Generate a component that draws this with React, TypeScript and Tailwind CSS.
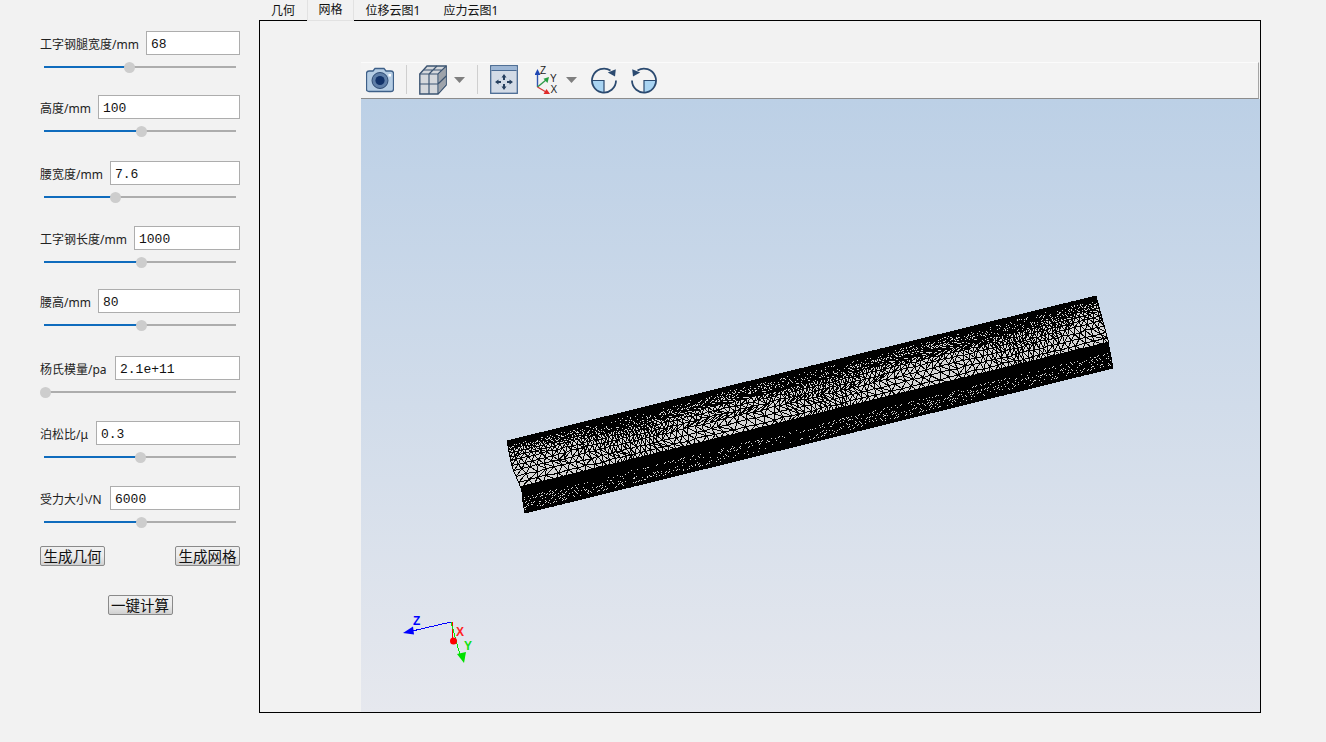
import { useMemo } from "react";

const cjk = "font-['Noto_Sans','Noto_Sans_CJK_SC',sans-serif]";

const params = [
  { label: "工字钢腿宽度/mm", value: "68", fill: 85, top: "mt-[31px]", input: "w-[94px]" },
  { label: "高度/mm", value: "100", fill: 97, top: "mt-5", input: "w-[142px]" },
  { label: "腰宽度/mm", value: "7.6", fill: 71, top: "mt-[22px]", input: "w-[130px]" },
  { label: "工字钢长度/mm", value: "1000", fill: 97, top: "mt-[21px]", input: "w-[106px]" },
  { label: "腰高/mm", value: "80", fill: 97, top: "mt-[19px]", input: "w-[142px]" },
  { label: "杨氏模量/pa", value: "2.1e+11", fill: 1, top: "mt-[23px]", input: "w-[125px]" },
  { label: "泊松比/μ", value: "0.3", fill: 96, top: "mt-[21px]", input: "w-[144px]" },
  { label: "受力大小/N", value: "6000", fill: 97, top: "mt-[21px]", input: "w-[130px]" },
];

const ParamRow = ({ p }: { p: (typeof params)[number] }) => (
  <div className={p.top}>
    <div className="flex items-center justify-between h-6">
      <span className={`${cjk} text-xs text-[#222] whitespace-nowrap pt-[3px]`}>{p.label}</span>
      <input
        readOnly
        value={p.value}
        className={`${p.input} h-6 border border-[#adadad] bg-white pl-1 pt-[3px] text-[13px] text-[#111] font-['Liberation_Mono',monospace] outline-none`}
      />
    </div>
    <div className="flex items-center h-4 mt-1 mx-1">
      <div className="h-[2px] bg-[#0f6cbd]" style={{ width: p.fill }} />
      <div className="w-[11px] h-[11px] rounded-full bg-[#cdcdcd] -mx-[5px] z-10 shrink-0" />
      <div className="h-[2px] flex-1 bg-[#adadad]" />
    </div>
  </div>
);

const Btn = ({ children }: { children: string }) => (
  <button className="w-[65px] h-5 rounded-[2px] border border-[#8a8a8a] bg-gradient-to-b from-[#f0f0f0] via-[#ececec] to-[#d0d0d0] text-[14.5px] leading-none text-[#111] font-['Noto_Sans_CJK_SC',sans-serif]">
    {children}
  </button>
);

const Camera = () => (
  <svg width="28" height="30" viewBox="0 0 28 30" className="ml-[5px]">
    <path d="M7 6 L9 3.5 H18 L20 6 H25 Q27.5 6 27.5 8.5 V24 Q27.5 26.5 25 26.5 H3 Q.5 26.5 .5 24 V8.5 Q.5 6 3 6 Z" fill="#b5cde4" stroke="#3d5f88" strokeWidth="1.3" />
    <circle cx="14" cy="15.5" r="8" fill="#5f7fa8" stroke="#2f4c74" />
    <circle cx="14" cy="15.5" r="4.6" fill="#12336a" />
    <rect x="22.5" y="9" width="2.5" height="2.5" fill="#fff" />
  </svg>
);

const Cube = () => (
  <svg width="28" height="30" viewBox="0 0 28 30" className="ml-[12px]">
    <path d="M.8 9 L8 1 H27.2 V20 L19 29 H.8 Z" fill="#d5d8dc" stroke="#3d5572" strokeWidth="1.4" />
    <path d="M19.7 9.6 L26.5 2.3 V19.7 L19.7 27.5 Z" fill="#9ea3aa" />
    <path d="M.8 9 H19 V29 M19 9 L27.2 1 M.8 19 H19 M10 9 V29 M10 9 L18 1 M5 5 H23 M19 19 L27.2 11" fill="none" stroke="#3d5572" strokeWidth="1.2" />
  </svg>
);

const Caret = ({ ml }: { ml: string }) => (
  <svg width="11" height="6" viewBox="0 0 11 6" className={ml}>
    <path d="M0 0 H11 L5.5 6 Z" fill="#7f7f7f" />
  </svg>
);

const Sep = ({ ml }: { ml: string }) => <div className={`${ml} w-px h-[29px] bg-[#cfcfcf]`} />;

const FitView = () => (
  <svg width="28" height="29" viewBox="0 0 28 29" className="ml-3">
    <rect x=".7" y=".7" width="26.6" height="27.6" fill="#d3dbe6" stroke="#4a6a92" strokeWidth="1.3" />
    <rect x="1.4" y="1.4" width="25.2" height="3.6" fill="#9db7d6" />
    <rect x="1.4" y="5" width="25.2" height="1" fill="#4a6a92" />
    <path d="M14 9 L16.5 12.5 H15 V15 H13 V12.5 H11.5 Z M14 25 L16.5 21.5 H15 V19 H13 V21.5 H11.5 Z M5 17 L8.5 14.5 V16 H11 V18 H8.5 V19.5 Z M23 17 L19.5 14.5 V16 H17 V18 H19.5 V19.5 Z" fill="#27405f" />
  </svg>
);

const AxisIcon = () => (
  <svg width="24" height="30" viewBox="0 0 24 30" className="ml-[17px]">
    <path d="M2.5 22 V8" stroke="#2f55b0" strokeWidth="1.4" />
    <path d="M2.5 4 L5.5 10 H-.5 Z" fill="#1f47b5" />
    <path d="M2.5 22 L11 15" stroke="#2f9a4a" strokeWidth="1.4" />
    <path d="M14 12 L12.5 18 L8.5 13.8 Z" fill="#24a040" />
    <path d="M2.5 22 L11 27" stroke="#d63a3a" strokeWidth="1.4" />
    <path d="M15 29 L8.5 29 L11.5 24 Z" fill="#e02b2b" />
    <text x="5" y="9" fontSize="10" fontFamily="Liberation Sans" fill="#222">Z</text>
    <text x="15" y="16.5" fontSize="10" fontFamily="Liberation Sans" fill="#222">Y</text>
    <text x="15.5" y="28" fontSize="10" fontFamily="Liberation Sans" fill="#222">X</text>
  </svg>
);

const Rotate = ({ ml, flip }: { ml: string; flip?: boolean }) => (
  <svg width="26" height="28" viewBox="0 0 26 28" className={ml}>
    <g transform={flip ? "translate(26 0) scale(-1 1)" : undefined}>
      <path d="M13 14.5 H1.2 A12 12 0 0 0 13 26.5 Z" fill="#a9d4f2" />
      <path d="M19.5 4.5 A12 12 0 1 0 25 14.5" fill="none" stroke="#2b4a70" strokeWidth="1.8" />
      <path d="M1 14.5 H13 V26" fill="none" stroke="#2b4a70" strokeWidth="1.2" />
      <path d="M24.8 3.2 L24 10.5 L16.8 6.5 Z" fill="#2b4a70" />
    </g>
  </svg>
);

type Pt = [number, number];

const lerp = (a: Pt, b: Pt, t: number): Pt => [a[0] + (b[0] - a[0]) * t, a[1] + (b[1] - a[1]) * t];

// tiny seeded generator so the mesh is the same on every render
const makeRand = (seed: number) => () => {
  seed = (seed * 1664525 + 1013904223) % 4294967296;
  return seed / 4294967296;
};

const strip = (
  left: (v: number) => Pt,
  right: (v: number) => Pt,
  rows: number[],
  spacing: (v: number, u: number) => number,
  jitter: number,
  seed: number,
) => {
  const rand = makeRand(seed);
  const len = Math.hypot(right(0)[0] - left(0)[0], right(0)[1] - left(0)[1]);
  const lines: Pt[][] = rows.map((v, r) => {
    const a = left(v);
    const b = right(v);
    const pts: Pt[] = [];
    let u = 0;
    while (u < 1) {
      const p = lerp(a, b, u);
      const edge = r === 0 || r === rows.length - 1 || u === 0;
      pts.push(edge ? p : [p[0] + (rand() - 0.5) * jitter, p[1] + (rand() - 0.5) * jitter]);
      u += (spacing(v, u) * (0.8 + rand() * 0.4)) / len;
    }
    pts.push(b);
    return pts;
  });
  let d = "";
  lines.forEach((line, r) => {
    d += "M" + line.map((p) => `${p[0].toFixed(1)} ${p[1].toFixed(1)}`).join("L");
    const next = lines[r + 1];
    if (!next) return;
    let i = 0;
    let j = 0;
    d += `M${line[0][0].toFixed(1)} ${line[0][1].toFixed(1)}L${next[0][0].toFixed(1)} ${next[0][1].toFixed(1)}`;
    while (i < line.length - 1 || j < next.length - 1) {
      const ui = (i + 1) / (line.length - 1);
      const uj = (j + 1) / (next.length - 1);
      if (j >= next.length - 1 || (i < line.length - 1 && ui < uj)) i++;
      else j++;
      d += `M${line[i][0].toFixed(1)} ${line[i][1].toFixed(1)}L${next[j][0].toFixed(1)} ${next[j][1].toFixed(1)}`;
    }
  });
  return d;
};

const Mesh = () => {
  const { web, flange } = useMemo(() => {
    const webLeft = (v: number): Pt =>
      v < 0.55 ? lerp([507, 441], [512, 467], v / 0.55) : lerp([512, 467], [521, 488], (v - 0.55) / 0.45);
    const webRight = (v: number): Pt => lerp([1096, 296], [1109, 344], v);
    const rows: number[] = [0];
    let y = 0;
    while (y < 47) {
      y += Math.min(1.8 + 0.15 * y, 6);
      rows.push(Math.min(y / 48, 1));
    }
    const web = strip(
      webLeft,
      webRight,
      rows,
      (v, u) => Math.max(2, (1.8 + 8.5 * v) * (0.85 + 0.3 * Math.sin(u * 19 + 1))),
      1.6,
      7,
    );
    const fRows = Array.from({ length: 8 }, (_, i) => i / 7);
    const flange = strip(
      (v) => lerp([522, 497], [525, 513], v),
      (v) => lerp([1110, 352], [1113, 368], v),
      fRows,
      () => 2.9,
      0.8,
      11,
    );
    return { web, flange };
  }, []);

  return (
    <g shapeRendering="crispEdges">
      <path d="M507 441 L1096 296 L1109 344 L1113 368 L525 513 L521 488 L512 467 Z" fill="#d6d6d6" />
      <path d={web} fill="none" stroke="#000" strokeWidth="1" />
      <path d={flange} fill="none" stroke="#000" strokeWidth="1" />
      <path d="M507 441 L1096 296 L1096.8 299.5 L507 446 Z" fill="#000" />
      <path d="M521 486 L1109 341.5 L1110 352 L522 497 Z" fill="#000" />
      <path d="M524.5 510 L1113 365 L1113 368 L525 513 Z" fill="#000" />
    </g>
  );
};

const Triad = () => (
  <g fontFamily="Liberation Sans" fontWeight="700" fontSize="12">
    <g shapeRendering="crispEdges">
      <path d="M451 622 L410 631.5" stroke="#0000ff" strokeWidth="1" />
      <path d="M452 622 L453 640" stroke="#ff0000" strokeWidth="1" />
      <path d="M451 622 L460 655" stroke="#00ee00" strokeWidth="1" />
    </g>
    <path d="M403 633 L413 626.5 L414 634.5 Z" fill="#0000ff" />
    <text x="413" y="625" fill="#0000ff">Z</text>
    <circle cx="453.5" cy="641" r="3.5" fill="#ff0000" />
    <text x="456" y="636" fill="#ff2020">X</text>
    <path d="M464 663 L457 654 L466 652 Z" fill="#00e000" />
    <text x="464" y="650" fill="#10e010">Y</text>
  </g>
);

const App = () => {
  return (
    <div className={`${cjk} w-[1326px] h-[742px] bg-[#f2f2f2] flex overflow-hidden`}>
      <div className="w-[259px] shrink-0 pl-10 pr-[19px]">
        {params.map((p) => (
          <ParamRow key={p.label} p={p} />
        ))}
        <div className="flex justify-between mt-4">
          <Btn>生成几何</Btn>
          <Btn>生成网格</Btn>
        </div>
        <div className="flex justify-center mt-[29px]">
          <Btn>一键计算</Btn>
        </div>
      </div>

      <div className="w-[1002px] flex flex-col">
        <div className="flex h-[21px] text-xs text-[#111] -mb-px z-10">
          <div className="w-12 flex items-center justify-center">几何</div>
          <div className="w-[47px] flex items-center justify-center bg-[#f2f2f2] border-x border-b border-[#e2e2e2]">网格</div>
          <div className="w-[78px] flex items-center justify-center">位移云图1</div>
          <div className="w-[78px] flex items-center justify-center">应力云图1</div>
        </div>
        <div className="h-[693px] border border-black pt-[41px] pl-[101px] flex flex-col">
          <div className="h-[37px] shrink-0 flex items-center pb-[2px] bg-[#f3f3f3] border-t border-[#fbfbfb] border-b border-b-[#8c8c8c] border-r border-r-[#a5a5a5] mr-px">
            <Camera />
            <Sep ml="ml-3" />
            <Cube />
            <Caret ml="ml-[7px]" />
            <Sep ml="ml-3" />
            <FitView />
            <AxisIcon />
            <Caret ml="ml-[7px]" />
            <Rotate ml="ml-[14px]" />
            <Rotate ml="ml-[14px]" flip />
          </div>
          <svg
            viewBox="361 99 899 613"
            className="flex-1 w-full min-h-0 bg-gradient-to-b from-[#bcd0e6] to-[#e6e8ee]"
          >
            <Mesh />
            <Triad />
          </svg>
        </div>
      </div>
    </div>
  );
};

export default App;
